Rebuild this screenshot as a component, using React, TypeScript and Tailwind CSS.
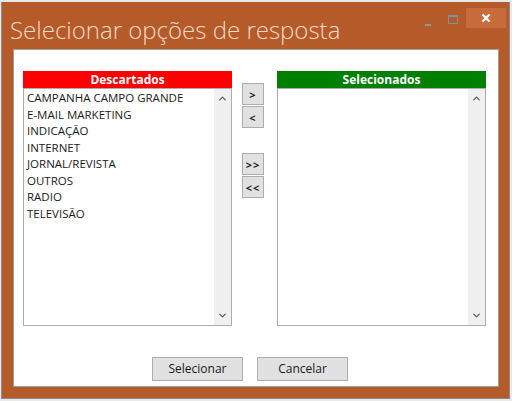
import { ChevronUp, ChevronDown } from "lucide-react"

const items = [
  "CAMPANHA CAMPO GRANDE",
  "E-MAIL MARKETING",
  "INDICAÇÃO",
  "INTERNET",
  "JORNAL/REVISTA",
  "OUTROS",
  "RADIO",
  "TELEVISÃO",
]

function ListBox({ title, color, entries }: { title: string; color: string; entries: string[] }) {
  return (
    <div className="flex flex-col w-[209px]">
      <div className={`h-[17px] flex items-center justify-center text-white font-bold text-[12px] leading-none ${color}`}>
        {title}
      </div>
      <div className="h-[238px] border border-[#adadad] bg-white flex">
        <div className="flex-1 pl-[3px] pt-[1px]">
          {entries.map((e) => (
            <div key={e} className="h-[16.5px] text-[11.5px] leading-[16.5px] text-[#1a1a1a] whitespace-nowrap">
              {e}
            </div>
          ))}
        </div>
        <div className="w-[17px] bg-[#f0f0f0] flex flex-col items-center justify-between py-[4px]">
          <ChevronUp size={11} strokeWidth={3} className="text-[#606060]" />
          <ChevronDown size={11} strokeWidth={3} className="text-[#606060]" />
        </div>
      </div>
    </div>
  )
}

function MoveButton({ label }: { label: string }) {
  return (
    <button className="w-[22px] h-[22px] bg-[#e1e1e1] border border-[#adadad] text-[11px] font-bold text-[#222] leading-none flex items-center justify-center tracking-[1px]">
      {label}
    </button>
  )
}

export default function App() {
  return (
    <div
      className="w-[512px] h-[401px] bg-[#e9e9e9] pt-[2px] pl-[1px] pr-[2px] pb-[2px]"
      style={{ fontFamily: '"Open Sans", "Noto Sans", sans-serif' }}
    >
      <div className="w-full h-full bg-[#b45b29] border-l border-r border-b border-[#8c8c8c] flex flex-col">
        {/* TITLE BAR */}
        <div className="h-[47px] flex items-start justify-between">
          <h1 className="pl-[8px] pt-[13px] text-[24px] font-light leading-[30px] text-[#f6d9c6] whitespace-nowrap">
            Selecionar opções de resposta
          </h1>
          <div className="flex items-start pt-[6px] pr-[3px]">
            <div className="w-[6px] h-[2px] bg-[#8a9aa8] mt-[16px] mr-[17px]" />
            <div className="w-[10px] h-[9px] border border-[#7f8f9d] border-t-[2px] mt-[7px] mr-[8px]" />
            <div className="w-[40px] h-[20px] bg-[#c96c3d] flex items-center justify-center">
              <svg width="10" height="10" viewBox="0 0 10 10">
                <path d="M1.5 1.5 L8.5 8.5 M8.5 1.5 L1.5 8.5" stroke="#fff" strokeWidth="2.2" />
              </svg>
            </div>
          </div>
        </div>

        {/* BODY PANEL */}
        <div className="ml-[11px] mr-[10px] h-[338px] bg-white border border-[#a0a0a0] pl-[9px] pt-[21px]">
          <div className="flex">
            <ListBox title="Descartados" color="bg-[#ff0000]" entries={items} />
            <div className="ml-[10px] mt-[12px] flex flex-col">
              <div className="flex flex-col gap-[1px]">
                <MoveButton label=">" />
                <MoveButton label="<" />
              </div>
              <div className="flex flex-col gap-[1px] mt-[25px]">
                <MoveButton label=">>" />
                <MoveButton label="<<" />
              </div>
            </div>
            <div className="ml-[13px]">
              <ListBox title="Selecionados" color="bg-[#008000]" entries={[]} />
            </div>
          </div>

          <div className="flex gap-[14px] ml-[129px] mt-[31px]">
            <button className="w-[91px] h-[24px] bg-[#e1e1e1] border border-[#adadad] text-[12px] text-[#1a1a1a]">
              Selecionar
            </button>
            <button className="w-[91px] h-[24px] bg-[#e1e1e1] border border-[#adadad] text-[12px] text-[#1a1a1a]">
              Cancelar
            </button>
          </div>
        </div>
      </div>
    </div>
  )
}
